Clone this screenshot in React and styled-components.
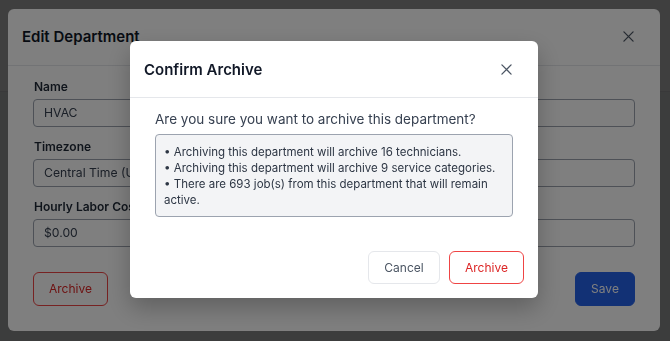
import React from "react";
import styled, { createGlobalStyle } from "styled-components";

const GlobalStyle = createGlobalStyle`
   * { box-sizing: border-box; }
   html, body { margin: 0; padding: 0; }
   body {
      font-family: Inter, "Noto Sans", Arial, sans-serif;
      background-color: #f3f4f6;
      color: #111827;
      width: 670px;
      height: 341px;
      overflow: hidden;
   }
`;

const Page = styled.div`
   height: 341px;
   display: flex;
   flex-direction: column;
`;

const TopBar = styled.div`
   height: 92px;
   background-color: #ffffff;
   border-bottom: 1px solid #e5e7eb;
`;

const Overlay = styled.div`
   position: fixed;
   inset: 0;
   padding: 0 2px 2px 0;
   background-color: rgba(0, 0, 0, 0.5);
   display: flex;
   align-items: center;
   justify-content: center;
`;

const Modal = styled.div`
   background-color: #ffffff;
   border-radius: 6px;
   width: ${({ $width }) => $width};
   height: ${({ $height }) => $height};
   display: flex;
   flex-direction: column;
   box-shadow: ${({ $raised }) =>
      $raised ? "0 10px 25px rgba(0, 0, 0, 0.25)" : "none"};
`;

const Header = styled.div`
   height: 57px;
   display: flex;
   align-items: center;
   justify-content: space-between;
   padding: 0 ${({ $right }) => $right}px 0 14px;
   border-bottom: 1px solid #e5e7eb;
`;

const Title = styled.h2`
   margin: 0;
   font-size: 15px;
   font-weight: 600;
   color: #111827;
`;

const CloseButton = styled.button`
   border: none;
   background: transparent;
   padding: 0;
   width: 12px;
   height: 12px;
   display: flex;
   align-items: center;
   justify-content: center;
   color: #4b5563;
   cursor: pointer;
`;

const EditBody = styled.div`
   padding: 11px 25px 0 25px;
   display: flex;
   flex-direction: column;
   gap: 10px;
`;

const Field = styled.div`
   display: flex;
   flex-direction: column;
   gap: 2px;
`;

const Label = styled.label`
   font-size: 12px;
   font-weight: 600;
   line-height: 20px;
   color: #1f2937;
   padding-left: 1px;
`;

const Input = styled.div`
   height: 28px;
   border: 1px solid #9ca3af;
   border-radius: 4px;
   padding: 0 10px;
   display: flex;
   align-items: center;
   font-size: 12.2px;
   color: #374151;
`;

const EditFooter = styled.div`
   margin-top: 25px;
   padding: 0 25px;
   display: flex;
   justify-content: space-between;
`;

const Button = styled.button`
   font-family: inherit;
   font-size: 12px;
   height: ${({ $height }) => $height}px;
   width: ${({ $width }) => $width}px;
   border-radius: 6px;
   cursor: pointer;
   border: 1px solid
      ${({ $variant }) =>
         $variant === "danger"
            ? "#ef4444"
            : $variant === "primary"
            ? "#2563eb"
            : "#e5e7eb"};
   background-color: ${({ $variant }) =>
      $variant === "primary" ? "#2563eb" : "#ffffff"};
   color: ${({ $variant }) =>
      $variant === "danger"
         ? "#dc2626"
         : $variant === "primary"
         ? "#ffffff"
         : "#4b5563"};
`;

const ConfirmBody = styled.div`
   padding: 12px 25px 0 25px;
   flex: 1;
`;

const Question = styled.p`
   margin: 0 0 6px 0;
   font-size: 13.5px;
   line-height: 18px;
   color: #374151;
`;

const Notes = styled.ul`
   margin: 0;
   list-style: none;
   padding: 9px 8px 8px 8px;
   background-color: #f3f4f6;
   border: 1px solid #9ca3af;
   border-radius: 4px;
`;

const Note = styled.li`
   font-size: 11.5px;
   line-height: 16px;
   color: #2d3644;
`;

const ConfirmFooter = styled.div`
   display: flex;
   justify-content: flex-end;
   gap: 9px;
   padding: 0 14px 14px 0;
`;

const XIcon = ({ size }) => (
   <svg width={size} height={size} viewBox="0 0 12 12" fill="none">
      <path
         d="M1 1L11 11M11 1L1 11"
         stroke="currentColor"
         strokeWidth="1.4"
         strokeLinecap="round"
      />
   </svg>
);

const notes = [
   "Archiving this department will archive 16 technicians.",
   "Archiving this department will archive 9 service categories.",
   "There are 693 job(s) from this department that will remain active.",
];

export default function App() {
   return (
      <>
         <GlobalStyle />
         <Page>
            <TopBar />
         </Page>

         <Overlay>
            <Modal $width="652px" $height="322px">
               <Header $right={26}>
                  <Title>Edit Department</Title>
                  <CloseButton aria-label="Close">
                     <XIcon size={11} />
                  </CloseButton>
               </Header>
               <EditBody>
                  <Field>
                     <Label>Name</Label>
                     <Input>HVAC</Input>
                  </Field>
                  <Field>
                     <Label>Timezone</Label>
                     <Input>Central Time (US &amp; Canada)</Input>
                  </Field>
                  <Field>
                     <Label>Hourly Labor Cost</Label>
                     <Input>$0.00</Input>
                  </Field>
               </EditBody>
               <EditFooter>
                  <Button $variant="danger" $width={75} $height={34}>
                     Archive
                  </Button>
                  <Button $variant="primary" $width={60} $height={34}>
                     Save
                  </Button>
               </EditFooter>
            </Modal>
         </Overlay>

         <Overlay>
            <Modal $width="408px" $height="257px" $raised>
               <Header $right={26}>
                  <Title>Confirm Archive</Title>
                  <CloseButton aria-label="Close">
                     <XIcon size={11} />
                  </CloseButton>
               </Header>
               <ConfirmBody>
                  <Question>Are you sure you want to archive this department?</Question>
                  <Notes>
                     {notes.map((n) => (
                        <Note key={n}>• {n}</Note>
                     ))}
                  </Notes>
               </ConfirmBody>
               <ConfirmFooter>
                  <Button $width={72} $height={33}>
                     Cancel
                  </Button>
                  <Button $variant="danger" $width={75} $height={33}>
                     Archive
                  </Button>
               </ConfirmFooter>
            </Modal>
         </Overlay>
      </>
   );
}
